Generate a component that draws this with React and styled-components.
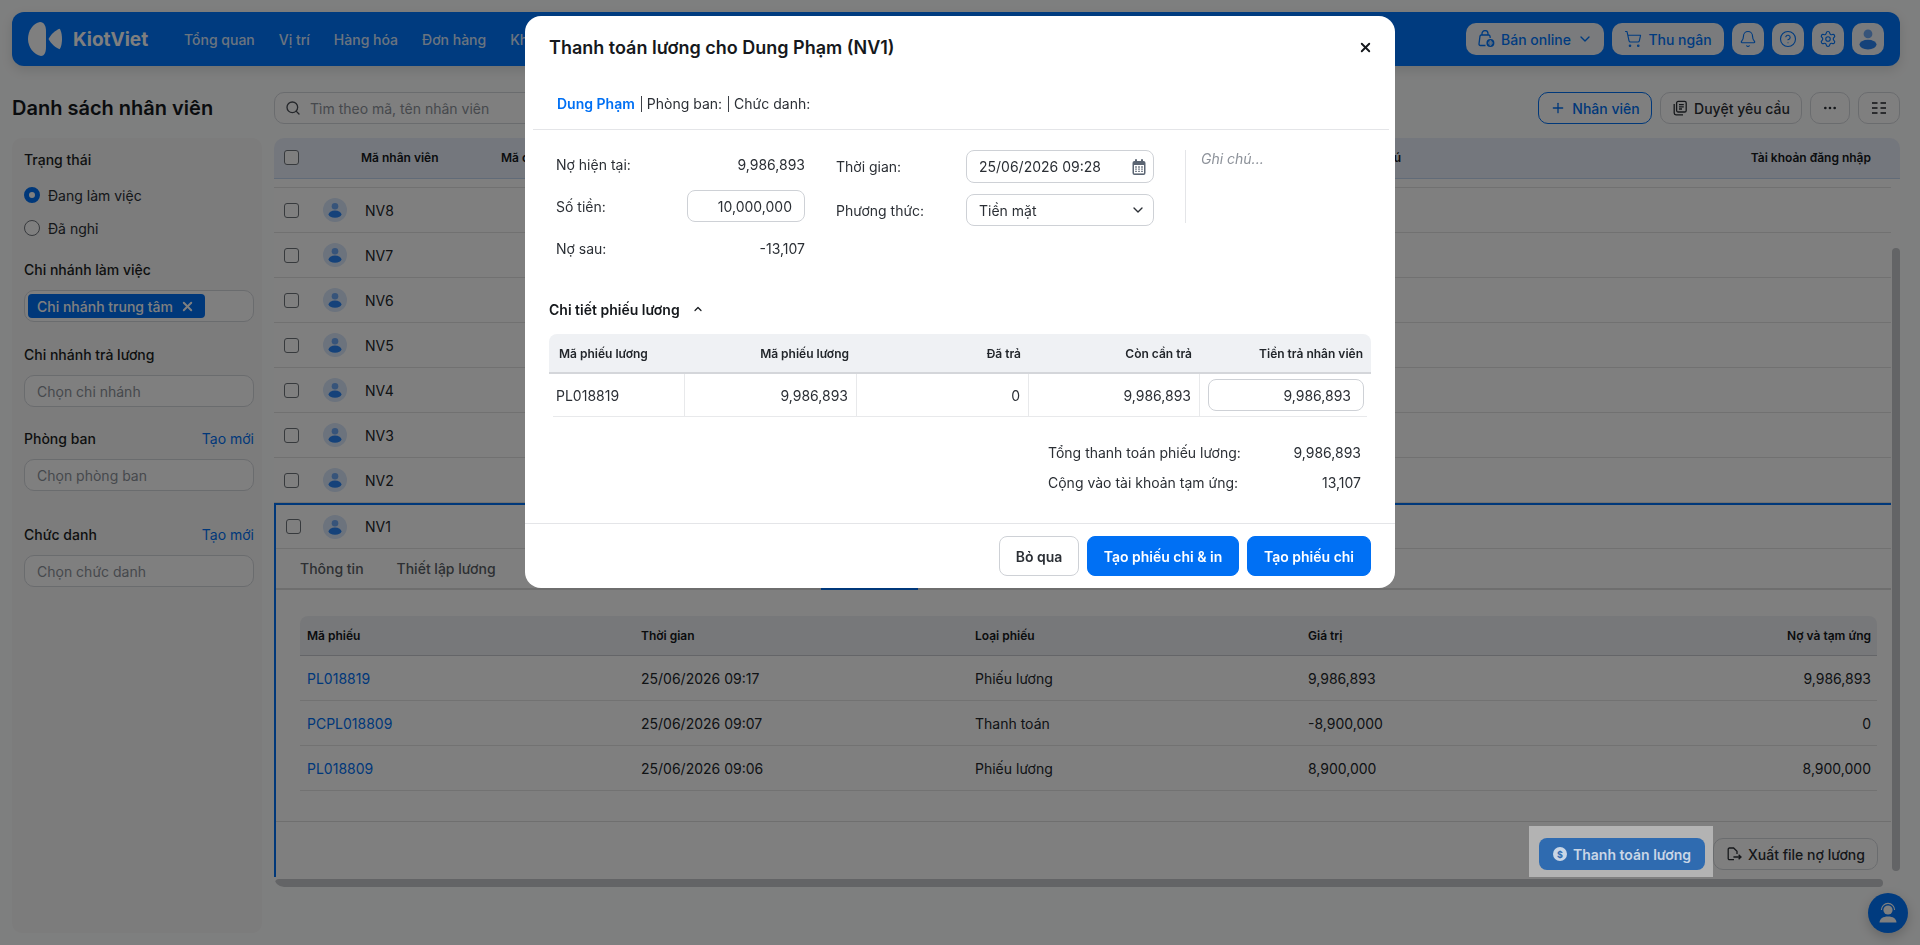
import React from "react"
import styled, { createGlobalStyle } from "styled-components"
import {
  Search,
  Plus,
  ChevronDown,
  ChevronUp,
  ShoppingCart,
  Bell,
  CircleHelp,
  Settings,
  Ellipsis,
  X,
} from "lucide-react"

const GlobalStyle = createGlobalStyle`
  html, body {
    margin: 0;
    height: 100%;
    overflow: hidden;
    background: #fdfefe;
    font-family: Inter, "Noto Sans", sans-serif;
    font-size: 14px;
    color: #1f2227;
  }
  * { box-sizing: border-box; }
`

const Page = styled.div`
  display: flex;
  flex-direction: column;
  height: 945px;
  padding: 12px 20px 12px 12px;
`

/* top bar */
const TopBar = styled.header`
  display: flex;
  align-items: center;
  height: 54px;
  flex: none;
  padding: 0 16px;
  border-radius: 12px;
  background: #0076ff;
  box-shadow: 0 4px 12px rgba(0, 0, 0, 0.12);
`
const Brand = styled.div`
  display: flex;
  align-items: center;
  gap: 11px;
  width: 156px;
  color: #fff;
  font-size: 19px;
  font-weight: 700;
`
const Nav = styled.nav`
  display: flex;
  gap: 24px;
  flex: 1;
`
const NavLink = styled.span`
  color: rgba(255, 255, 255, 0.86);
  font-weight: 500;
`
const TopActions = styled.div`
  display: flex;
  gap: 8px;
`
const TopButton = styled.div`
  display: flex;
  align-items: center;
  justify-content: center;
  gap: 6px;
  height: 32px;
  width: ${p => p.$width || 32}px;
  border-radius: 10px;
  background: #f4f7fb;
  color: #0076ff;
  font-weight: 500;
`

/* heading row */
const HeadRow = styled.div`
  display: flex;
  align-items: center;
  flex: none;
  margin-top: 26px;
  height: 32px;
`
const PageTitle = styled.h1`
  width: 262px;
  margin: 0;
  font-size: 20px;
  font-weight: 600;
  color: #15181c;
`
const SearchBox = styled.div`
  display: flex;
  align-items: center;
  gap: 9px;
  width: 440px;
  height: 32px;
  padding: 0 10px;
  border: 1px solid #d5d8dd;
  border-radius: 10px;
  background: #fff;
  color: #8d929a;
`
const HeadActions = styled.div`
  display: flex;
  gap: 8px;
  margin-left: auto;
`
const HeadButton = styled.div`
  display: flex;
  align-items: center;
  justify-content: center;
  gap: 6px;
  height: 32px;
  width: ${p => p.$width}px;
  border: 1px solid ${p => (p.$primary ? "#0070f4" : "#d5d8dd")};
  border-radius: 10px;
  background: #fff;
  color: ${p => (p.$primary ? "#0070f4" : "#2b2f35")};
  font-weight: 500;
`

/* content */
const Body = styled.div`
  display: flex;
  gap: 12px;
  margin-top: 14px;
  flex: none;
`

const Sidebar = styled.aside`
  width: 250px;
  height: 795px;
  padding: 12px 8px 0 12px;
  border-radius: 10px;
  background: #f8f8f8;
`
const FilterHead = styled.div`
  display: flex;
  justify-content: space-between;
  align-items: center;
  height: 20px;
  padding-bottom: 1px;
  margin-top: ${p => p.$top || 0}px;
  font-weight: 500;
  color: #1c1f23;
`
const CreateLink = styled.span`
  color: #0070f4;
  font-weight: 400;
`
const RadioRow = styled.label`
  display: flex;
  align-items: center;
  gap: 8px;
  height: 20px;
  margin-top: ${p => p.$top}px;
  color: #2b2f35;
`
const RadioDot = styled.span`
  width: 16px;
  height: 16px;
  border-radius: 50%;
  background: #fff;
  border: ${p => (p.$on ? "5px solid #0070f4" : "1px solid #6f747b")};
`
const FilterBox = styled.div`
  display: flex;
  align-items: center;
  height: 32px;
  margin-top: 10px;
  padding: 0 12px;
  border: 1px solid #d5d8dd;
  border-radius: 10px;
  background: #fff;
  color: #8d929a;
`
const TagBox = styled(FilterBox)`
  padding: 0 3px;
`
const Tag = styled.span`
  display: flex;
  align-items: center;
  gap: 7px;
  width: 177px;
  height: 24px;
  padding: 0 9px;
  border-radius: 4px;
  background: #0070f4;
  color: #fff;
  font-weight: 500;
`

/* staff table */
const TablePanel = styled.section`
  position: relative;
  width: 1626px;
  height: 749px;
  border-radius: 10px;
  background: #fff;
  overflow: hidden;
`
const TableHead = styled.div`
  display: flex;
  align-items: center;
  height: 41px;
  padding: 0 29px 1px 10px;
  background: #e9effa;
  border-bottom: 1px solid #c3d6f0;
  font-size: 12px;
  font-weight: 600;
  color: #15181c;
`
const HeadCell = styled.span`
  width: ${p => p.$width}px;
  flex: none;
  text-align: ${p => p.$align || "left"};
  white-space: nowrap;
`
const RowList = styled.div`
  margin-right: 9px;
`
const ScrolledEdge = styled.div`
  height: 9px;
  border-bottom: 1px solid #e2e2e2;
`
const StaffRow = styled.div`
  display: flex;
  align-items: center;
  height: ${p => (p.$open ? 44 : 45)}px;
  padding-left: 10px;
  border-bottom: 1px solid #e2e2e2;
`
const CheckBox = styled.span`
  width: 15px;
  height: 15px;
  flex: none;
  border: 1px solid #6f747b;
  border-radius: 3px;
  background: #fff;
`
const AvatarDisc = styled.span`
  display: flex;
  margin: 0 18px 0 ${p => (p.$open ? 22 : 24)}px;
`
const StaffCode = styled.span`
  color: #22262b;
`
const OpenRow = styled.div`
  border-top: 2px solid #0070f4;
  border-left: 2px solid #0070f4;
`

/* expanded detail */
const Tabs = styled.div`
  display: flex;
  height: 41px;
  padding-left: 24px;
  border-bottom: 2px solid #dcdcdc;
`
const Tab = styled.span`
  height: 41px;
  line-height: 40px;
  margin-right: 33px;
  margin-left: ${p => p.$offset || 0}px;
  font-weight: 500;
  color: #5a5f66;
  border-bottom: ${p => (p.$active ? "3px solid #0070f4" : "none")};
`
const DetailWrap = styled.div`
  padding: 26px 14px 30px 24px;
  border-bottom: 1px solid #dedede;
`
const ledgerColumns = "334px 334px 333px 1fr"
const LedgerHead = styled.div`
  display: grid;
  grid-template-columns: ${ledgerColumns};
  align-items: center;
  height: 40px;
  padding: 0 6px 0 7px;
  border-radius: 8px 8px 0 0;
  background: #eff1f4;
  border-bottom: 1px solid #c8cad0;
  font-size: 12px;
  font-weight: 600;
  color: #15181c;
`
const LedgerRow = styled.div`
  display: grid;
  grid-template-columns: ${ledgerColumns};
  align-items: center;
  height: 45px;
  padding: 0 6px 0 7px;
  border-bottom: 1px solid #e4e4e4;
  color: #22262b;
`
const LedgerSplit = styled.span`
  display: flex;
  justify-content: space-between;
`
const TicketLink = styled.span`
  color: #0070f4;
`
const DetailFooter = styled.div`
  display: flex;
  justify-content: flex-end;
  align-items: flex-start;
  padding: 4px 13px 0 0;
`
const Spotlight = styled.div`
  position: relative;
  z-index: 11;
  padding: 12px 8px 7px 10px;
  background: #b3b3b3;
`
const PayButton = styled.div`
  display: flex;
  align-items: center;
  justify-content: center;
  gap: 6px;
  width: 166px;
  height: 32px;
  border-radius: 8px;
  background: #2f6bb0;
  color: #c9d6e6;
  font-weight: 600;
`
const DollarDisc = styled.span`
  display: flex;
  align-items: center;
  justify-content: center;
  width: 14px;
  height: 14px;
  border-radius: 50%;
  background: #c9d6e6;
  color: #2f6bb0;
  font-size: 9px;
  font-weight: 700;
`
const ExportButton = styled.div`
  display: flex;
  align-items: center;
  justify-content: center;
  gap: 6px;
  width: 165px;
  height: 32px;
  margin-top: 12px;
  border: 1px solid #d5d8dd;
  border-radius: 10px;
  background: #fff;
  color: #2b2f35;
  font-weight: 500;
`
const VerticalThumb = styled.div`
  position: absolute;
  top: 110px;
  right: 0;
  width: 8px;
  height: 623px;
  border-radius: 4px;
  background: #c6c8cc;
`
const HorizontalThumb = styled.div`
  position: absolute;
  left: 1px;
  bottom: 0;
  width: 1608px;
  height: 8px;
  border-radius: 4px;
  background: #c6c8cc;
`
const SupportFab = styled.div`
  position: fixed;
  right: 12px;
  bottom: 12px;
  display: flex;
  align-items: center;
  justify-content: center;
  width: 40px;
  height: 40px;
  border-radius: 50%;
  background: #0076ff;
  box-shadow: 0 4px 12px rgba(0, 0, 0, 0.2);
`

/* modal */
const Overlay = styled.div`
  position: fixed;
  inset: 0;
  z-index: 10;
  display: flex;
  justify-content: center;
  align-items: flex-start;
  padding-top: 16px;
  background: rgba(0, 0, 0, 0.5);
`
const Modal = styled.div`
  position: relative;
  z-index: 12;
  width: 870px;
  height: 572px;
  border-radius: 16px;
  background: #fff;
  display: flex;
  flex-direction: column;
`
const ModalHead = styled.div`
  display: flex;
  align-items: center;
  justify-content: space-between;
  height: 62px;
  padding: 0 22px 0 24px;
`
const ModalTitle = styled.h2`
  margin: 0;
  font-size: 18px;
  font-weight: 600;
  color: #15181c;
`
const InfoLine = styled.div`
  display: flex;
  align-items: center;
  height: 52px;
  margin: 0 6px 0 8px;
  padding: 0 0 0 24px;
  border-bottom: 1px solid #e4e5e8;
  color: #2b2f35;
`
const InfoName = styled.span`
  color: #0070f4;
  font-weight: 600;
`
const InfoPart = styled.span`
  margin-left: 6px;
  padding-left: 5px;
  border-left: 1px solid #3c4046;
  line-height: 16px;
`
const FormGrid = styled.div`
  display: flex;
  padding: 13px 0 0 31px;
  height: 169px;
`
const PayColumn = styled.div`
  width: 249px;
  margin-right: 31px;
`
const PayLine = styled.div`
  display: flex;
  align-items: center;
  justify-content: space-between;
  height: 42px;
  color: #2b2f35;
`
const TimeColumn = styled.div`
  width: 318px;
  padding-top: 7px;
`
const TimeLine = styled.div`
  display: flex;
  justify-content: space-between;
  align-items: center;
  margin-bottom: 11px;
  color: #2b2f35;
`
const Field = styled.div`
  display: flex;
  align-items: center;
  justify-content: ${p => (p.$right ? "flex-end" : "space-between")};
  width: ${p => p.$width}px;
  height: ${p => p.$height || 32}px;
  padding: 0 ${p => (p.$right ? 12 : 7)}px 0 12px;
  border: 1px solid #ced1d6;
  border-radius: 8px;
  background: #fff;
  color: #2b2f35;
`
const NoteColumn = styled.div`
  height: 73px;
  margin: 7px 0 0 31px;
  padding: 0 0 0 15px;
  border-left: 1px solid #e4e5e8;
  color: #8d929a;
  font-style: italic;
`
const DetailToggle = styled.div`
  display: flex;
  align-items: center;
  gap: 12px;
  height: 20px;
  padding-left: 24px;
  font-weight: 600;
  color: #15181c;
`
const SlipTable = styled.div`
  margin: 15px 24px 0;
`
const SlipHead = styled.div`
  display: grid;
  grid-template-columns: 136px 172px 172px 171px 1fr;
  align-items: center;
  height: 40px;
  border-radius: 8px 8px 0 0;
  background: #eff1f4;
  border-bottom: 2px solid #d4d6da;
  font-size: 12px;
  font-weight: 600;
  color: #22262b;
`
const SlipHeadCell = styled.span`
  padding: ${p => (p.$first ? "0 0 0 10px" : "0 8px 0 0")};
  text-align: ${p => (p.$first ? "left" : "right")};
`
const SlipRow = styled.div`
  display: grid;
  grid-template-columns: 132px 172px 172px 171px 1fr;
  align-items: center;
  height: 43px;
  margin: 0 4px;
  border-bottom: 1px solid #e8e9eb;
  color: #2b2f35;
`
const SlipCell = styled.span`
  display: flex;
  align-items: center;
  justify-content: ${p => (p.$first ? "flex-start" : "flex-end")};
  height: 100%;
  padding: 0 ${p => (p.$first ? 0 : 8)}px 0 ${p => (p.$first ? 3 : 0)}px;
  border-right: 1px solid #e8e9eb;
`
const SlipInputCell = styled.span`
  display: flex;
  align-items: center;
  height: 100%;
  padding-left: 8px;
`
const Totals = styled.div`
  margin-top: 20px;
  padding: 0 34px 0 523px;
`
const TotalLine = styled.div`
  display: flex;
  justify-content: space-between;
  align-items: center;
  height: 30px;
  color: #2b2f35;
`
const ModalFooter = styled.div`
  display: flex;
  justify-content: flex-end;
  gap: 8px;
  margin-top: auto;
  padding: 12px 24px;
  border-top: 1px solid #e4e5e8;
`
const ModalButton = styled.div`
  display: flex;
  align-items: center;
  justify-content: center;
  width: ${p => p.$width}px;
  height: 40px;
  border-radius: 8px;
  font-weight: 600;
  color: ${p => (p.$primary ? "#fff" : "#2b2f35")};
  background: ${p => (p.$primary ? "#0070f4" : "#fff")};
  border: 1px solid ${p => (p.$primary ? "#0070f4" : "#ced1d6")};
`

/* drawings */
const KiotLogo = () => (
  <svg width="34" height="34" viewBox="0 0 34 34" fill="#fff">
    <path d="M12 0C5 1 0 9 0 17c0 8 6 16 13 17 3 0 5-3 5-9V9c0-5-2-9-6-9Z" />
    <path d="M20.5 17C23 12 28 8 31.5 6.8 33 8 34 13 34 17s-1 9-2.5 10.2C28 26 23 22 20.5 17Z" />
  </svg>
)

const PersonIcon = ({ size = 24, disc = "#d8e6fa" }) => (
  <svg width={size} height={size} viewBox="0 0 24 24">
    <circle cx="12" cy="12" r="12" fill={disc} />
    <circle cx="12" cy="8.2" r="3.3" fill="#6fa8f5" />
    <ellipse cx="12" cy="16.2" rx="6.4" ry="3.6" fill="#2a85f5" />
  </svg>
)

const BagGlobeIcon = () => (
  <svg width="18" height="18" viewBox="0 0 18 18" fill="none" stroke="#0076ff" strokeWidth="1.3">
    <path d="M5 5V3.6a3 3 0 0 1 6 0V5" />
    <path d="M8.5 15.5H3.4a1.4 1.4 0 0 1-1.4-1.6L3 6.2A1.4 1.4 0 0 1 4.4 5h7.2a1.4 1.4 0 0 1 1.4 1.2l.2 1.8" />
    <circle cx="13.4" cy="13" r="4" fill="#0076ff" stroke="none" />
    <path d="M13.4 10.6v4.8M11 13h4.8" stroke="#f4f7fb" strokeWidth="0.8" />
    <ellipse cx="13.4" cy="13" rx="1.5" ry="2.4" stroke="#f4f7fb" strokeWidth="0.7" />
  </svg>
)

const RequestIcon = () => (
  <svg width="16" height="16" viewBox="0 0 16 16" fill="none" stroke="#2b2f35" strokeWidth="1.3">
    <rect x="4.6" y="1.4" width="9.6" height="10.6" rx="1.6" />
    <path d="M2.2 4v9a1.8 1.8 0 0 0 1.8 1.8h7M7 4.6h4.8M7 6.8h4.8M7 9h3" />
  </svg>
)

const ColumnsIcon = () => (
  <svg width="16" height="14" viewBox="0 0 16 14" fill="none" stroke="#1f2227" strokeWidth="1.6">
    <path d="M1 2h5.5M9.5 2H15M1 7h5.5M9.5 7H15M1 12h5.5M9.5 12H15" />
  </svg>
)

const CalendarIcon = () => (
  <svg width="14" height="16" viewBox="0 0 14 16">
    <rect x="0.5" y="2" width="13" height="14" rx="2" fill="#5a6472" />
    <rect x="3" y="0" width="2" height="4" rx="1" fill="#5a6472" />
    <rect x="9" y="0" width="2" height="4" rx="1" fill="#5a6472" />
    <rect x="2" y="6" width="10" height="8.4" fill="#fff" />
    <path d="M3.2 8h1.6M6.2 8h1.6M9.2 8h1.6M3.2 10.2h1.6M6.2 10.2h1.6M9.2 10.2h1.6M3.2 12.4h1.6M6.2 12.4h1.6M9.2 12.4h1.6" stroke="#5a6472" strokeWidth="1.3" />
  </svg>
)

const ExportIcon = () => (
  <svg width="16" height="16" viewBox="0 0 16 16" fill="none" stroke="#2b2f35" strokeWidth="1.3">
    <path d="M8 13.6H3.4a1.2 1.2 0 0 1-1.2-1.2V3.2A1.2 1.2 0 0 1 3.4 2h4.2L11 5.2V8" />
    <path d="M7.4 11h7.6M12.6 8.8 15 11l-2.4 2.2" />
  </svg>
)

const AgentIcon = () => (
  <svg width="24" height="24" viewBox="0 0 24 24" fill="none">
    <circle cx="12" cy="9" r="4.6" fill="#fff" />
    <path d="M5.4 9a6.6 6.6 0 0 1 13.2 0" stroke="#fff" strokeWidth="1.1" />
    <path d="M7.4 13.6c3 1.4 6.2 1.4 9.2 0" stroke="#0076ff" strokeWidth="1" />
    <path d="M3.5 21.5c.4-4 3.4-6 8.5-6s8.1 2 8.5 6h-17Z" fill="#fff" />
  </svg>
)

const staffRows = ["NV8", "NV7", "NV6", "NV5", "NV4", "NV3", "NV2"]

const tickets = [
  { code: "PL018819", time: "25/06/2026 09:17", kind: "Phiếu lương", value: "9,986,893", debt: "9,986,893" },
  { code: "PCPL018809", time: "25/06/2026 09:07", kind: "Thanh toán", value: "-8,900,000", debt: "0" },
  { code: "PL018809", time: "25/06/2026 09:06", kind: "Phiếu lương", value: "8,900,000", debt: "8,900,000" },
]

const navItems = ["Tổng quan", "Vị trí", "Hàng hóa", "Đơn hàng", "Khách hàng"]

const App = () => {
  return (
    <>
      <GlobalStyle />
      <Page>
        <TopBar>
          <Brand>
            <KiotLogo />
            KiotViet
          </Brand>
          <Nav>
            {navItems.map(item => (
              <NavLink key={item}>{item}</NavLink>
            ))}
          </Nav>
          <TopActions>
            <TopButton $width={138}>
              <BagGlobeIcon />
              Bán online
              <ChevronDown size={16} />
            </TopButton>
            <TopButton $width={112}>
              <ShoppingCart size={18} strokeWidth={1.5} />
              Thu ngân
            </TopButton>
            <TopButton>
              <Bell size={18} strokeWidth={1.5} />
            </TopButton>
            <TopButton>
              <CircleHelp size={18} strokeWidth={1.5} />
            </TopButton>
            <TopButton>
              <Settings size={18} strokeWidth={1.5} />
            </TopButton>
            <TopButton>
              <PersonIcon size={32} disc="#f4f7fb" />
            </TopButton>
          </TopActions>
        </TopBar>

        <HeadRow>
          <PageTitle>Danh sách nhân viên</PageTitle>
          <SearchBox>
            <Search size={16} color="#4a4f56" />
            Tìm theo mã, tên nhân viên
          </SearchBox>
          <HeadActions>
            <HeadButton $primary $width={114}>
              <Plus size={16} />
              Nhân viên
            </HeadButton>
            <HeadButton $width={142}>
              <RequestIcon />
              Duyệt yêu cầu
            </HeadButton>
            <HeadButton $width={40}>
              <Ellipsis size={16} />
            </HeadButton>
            <HeadButton $width={42}>
              <ColumnsIcon />
            </HeadButton>
          </HeadActions>
        </HeadRow>

        <Body>
          <Sidebar>
            <FilterHead>Trạng thái</FilterHead>
            <RadioRow $top={15}>
              <RadioDot $on />
              Đang làm việc
            </RadioRow>
            <RadioRow $top={13}>
              <RadioDot />
              Đã nghỉ
            </RadioRow>
            <FilterHead $top={22}>Chi nhánh làm việc</FilterHead>
            <TagBox>
              <Tag>
                Chi nhánh trung tâm
                <X size={15} strokeWidth={3} />
              </Tag>
            </TagBox>
            <FilterHead $top={23}>Chi nhánh trả lương</FilterHead>
            <FilterBox>Chọn chi nhánh</FilterBox>
            <FilterHead $top={22}>
              Phòng ban
              <CreateLink>Tạo mới</CreateLink>
            </FilterHead>
            <FilterBox>Chọn phòng ban</FilterBox>
            <FilterHead $top={34}>
              Chức danh
              <CreateLink>Tạo mới</CreateLink>
            </FilterHead>
            <FilterBox>Chọn chức danh</FilterBox>
          </Sidebar>

          <TablePanel>
            <TableHead>
              <CheckBox />
              <HeadCell $width={62} />
              <HeadCell $width={140}>Mã nhân viên</HeadCell>
              <HeadCell $width={856}>Mã chấm công</HeadCell>
              <HeadCell $width={44}>Ghi chú</HeadCell>
              <HeadCell $width={470} $align="right">Tài khoản đăng nhập</HeadCell>
            </TableHead>
            <RowList>
              <ScrolledEdge />
              {staffRows.map(code => (
                <StaffRow key={code}>
                  <CheckBox />
                  <AvatarDisc>
                    <PersonIcon />
                  </AvatarDisc>
                  <StaffCode>{code}</StaffCode>
                </StaffRow>
              ))}
              <OpenRow>
                <StaffRow $open>
                  <CheckBox />
                  <AvatarDisc $open>
                    <PersonIcon />
                  </AvatarDisc>
                  <StaffCode>NV1</StaffCode>
                </StaffRow>
                <Tabs>
                  <Tab>Thông tin</Tab>
                  <Tab>Thiết lập lương</Tab>
                  <Tab $active $offset={292}>Nợ và tạm ứng</Tab>
                </Tabs>
                <DetailWrap>
                  <LedgerHead>
                    <span>Mã phiếu</span>
                    <span>Thời gian</span>
                    <span>Loại phiếu</span>
                    <LedgerSplit>
                      <span>Giá trị</span>
                      <span>Nợ và tạm ứng</span>
                    </LedgerSplit>
                  </LedgerHead>
                  {tickets.map(ticket => (
                    <LedgerRow key={ticket.code}>
                      <TicketLink>{ticket.code}</TicketLink>
                      <span>{ticket.time}</span>
                      <span>{ticket.kind}</span>
                      <LedgerSplit>
                        <span>{ticket.value}</span>
                        <span>{ticket.debt}</span>
                      </LedgerSplit>
                    </LedgerRow>
                  ))}
                </DetailWrap>
                <DetailFooter>
                  <Spotlight>
                    <PayButton>
                      <DollarDisc>$</DollarDisc>
                      Thanh toán lương
                    </PayButton>
                  </Spotlight>
                  <ExportButton>
                    <ExportIcon />
                    Xuất file nợ lương
                  </ExportButton>
                </DetailFooter>
              </OpenRow>
            </RowList>
            <VerticalThumb />
            <HorizontalThumb />
          </TablePanel>
        </Body>

        <SupportFab>
          <AgentIcon />
        </SupportFab>
      </Page>

      <Overlay>
        <Modal>
          <ModalHead>
            <ModalTitle>Thanh toán lương cho Dung Phạm (NV1)</ModalTitle>
            <X size={15} strokeWidth={3} color="#15181c" />
          </ModalHead>
          <InfoLine>
            <InfoName>Dung Phạm</InfoName>
            <InfoPart>Phòng ban:</InfoPart>
            <InfoPart>Chức danh:</InfoPart>
          </InfoLine>
          <FormGrid>
            <PayColumn>
              <PayLine>
                Nợ hiện tại:
                <span>9,986,893</span>
              </PayLine>
              <PayLine>
                Số tiền:
                <Field $right $width={118}>10,000,000</Field>
              </PayLine>
              <PayLine>
                Nợ sau:
                <span>-13,107</span>
              </PayLine>
            </PayColumn>
            <TimeColumn>
              <TimeLine>
                Thời gian:
                <Field $width={188} $height={33}>
                  25/06/2026 09:28
                  <CalendarIcon />
                </Field>
              </TimeLine>
              <TimeLine>
                Phương thức:
                <Field $width={188}>
                  Tiền mặt
                  <ChevronDown size={16} />
                </Field>
              </TimeLine>
            </TimeColumn>
            <NoteColumn>Ghi chú...</NoteColumn>
          </FormGrid>
          <DetailToggle>
            Chi tiết phiếu lương
            <ChevronUp size={12} strokeWidth={2.4} />
          </DetailToggle>
          <SlipTable>
            <SlipHead>
              <SlipHeadCell $first>Mã phiếu lương</SlipHeadCell>
              <SlipHeadCell>Mã phiếu lương</SlipHeadCell>
              <SlipHeadCell>Đã trả</SlipHeadCell>
              <SlipHeadCell>Còn cần trả</SlipHeadCell>
              <SlipHeadCell>Tiền trả nhân viên</SlipHeadCell>
            </SlipHead>
            <SlipRow>
              <SlipCell $first>PL018819</SlipCell>
              <SlipCell>9,986,893</SlipCell>
              <SlipCell>0</SlipCell>
              <SlipCell>9,986,893</SlipCell>
              <SlipInputCell>
                <Field $right $width={156}>9,986,893</Field>
              </SlipInputCell>
            </SlipRow>
          </SlipTable>
          <Totals>
            <TotalLine>
              Tổng thanh toán phiếu lương:
              <span>9,986,893</span>
            </TotalLine>
            <TotalLine>
              Cộng vào tài khoản tạm ứng:
              <span>13,107</span>
            </TotalLine>
          </Totals>
          <ModalFooter>
            <ModalButton $width={80}>Bỏ qua</ModalButton>
            <ModalButton $primary $width={152}>Tạo phiếu chi &amp; in</ModalButton>
            <ModalButton $primary $width={124}>Tạo phiếu chi</ModalButton>
          </ModalFooter>
        </Modal>
      </Overlay>
    </>
  )
}

export default App
